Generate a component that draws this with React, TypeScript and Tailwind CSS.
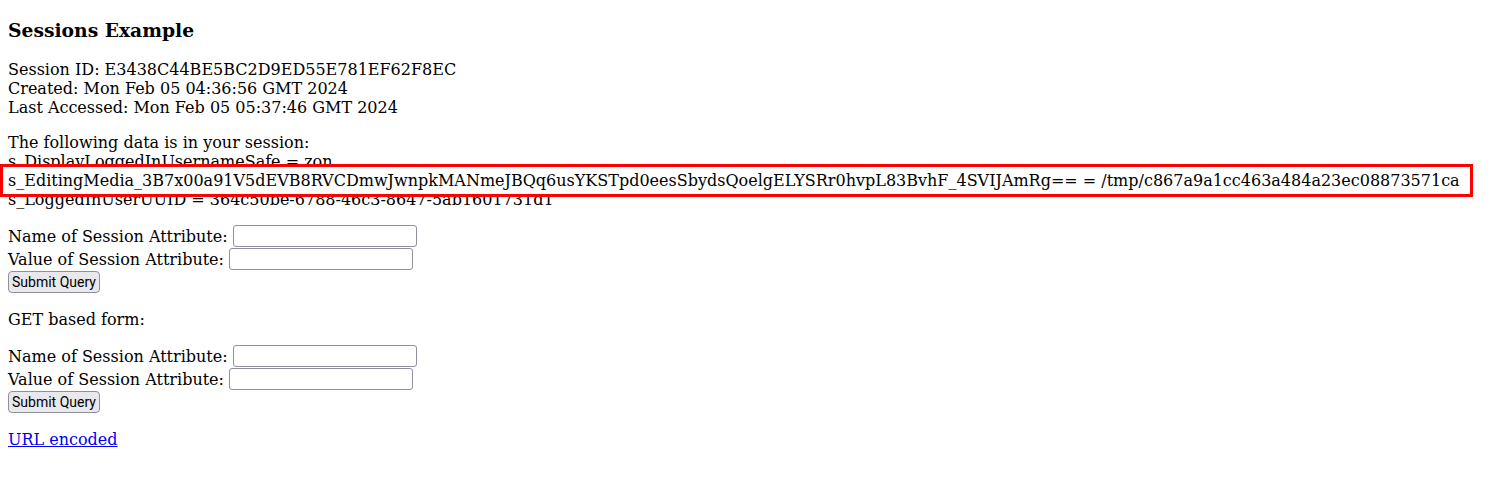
export default function App() {
  const rows = (
    <>
      <div className="flex h-[23px] items-center">
        <span>Name of Session Attribute:</span>
        <input
          type="text"
          className="ml-[5px] h-[22px] w-[184px] rounded-[3px] border border-[#8f8f9d] bg-white px-1 text-[13.33px]"
        />
      </div>
      <div className="flex h-[23px] items-center">
        <span>Value of Session Attribute:</span>
        <input
          type="text"
          className="ml-[5px] h-[22px] w-[184px] rounded-[3px] border border-[#8f8f9d] bg-white px-1 text-[13.33px]"
        />
      </div>
      <div className="flex h-[23px] items-center">
        <button className="h-[22px] rounded-[4px] border border-[#8f8f9d] bg-[#e9e9ed] px-[3px] font-['Roboto',sans-serif] text-[14px] leading-[18px] text-black">
          Submit Query
        </button>
      </div>
    </>
  );

  return (
    <main className="min-h-screen bg-white px-2 pt-[19px] font-['DejaVu_Serif',serif] text-[16px] leading-[19px] text-black">
      <h3 className="mb-[18.72px] text-[18.72px] font-bold leading-[22px]">Sessions Example</h3>
      <p>
        Session ID: E3438C44BE5BC2D9ED55E781EF62F8EC
        <br />
        Created: Mon Feb 05 04:36:56 GMT 2024
        <br />
        Last Accessed: Mon Feb 05 05:37:46 GMT 2024
      </p>
      <p className="mt-4">
        The following data is in your session:
        <br />
        s_DisplayLoggedInUsernameSafe = zon
        <br />
        <span className="relative block">
          <span className="absolute -left-2 top-[-7px] h-[33px] w-[1473px] border-[3px] border-[#ff0000] bg-white" />
          <span className="relative">
            s_EditingMedia_3B7x00a91V5dEVB8RVCDmwJwnpkMANmeJBQq6usYKSTpd0eesSbydsQoelgELYSRr0hvpL83BvhF_4SVIJAmRg== = /tmp/c867a9a1cc463a484a23ec08873571ca
          </span>
        </span>
        s_LoggedInUserUUID = 364c50be-6788-46c3-8647-5ab1601731d1
      </p>
      <form className="mt-4">{rows}</form>
      <p className="mt-4">GET based form:</p>
      <form className="mt-4">{rows}</form>
      <p className="mt-4">
        <a href="#" className="text-[#0000ee] underline">
          URL encoded
        </a>
      </p>
    </main>
  );
}
